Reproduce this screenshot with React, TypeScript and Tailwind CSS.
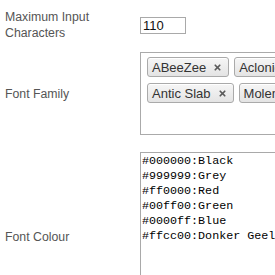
import { X } from "lucide-react";

const tags = [
  ["ABeeZee", "Aclonica"],
  ["Antic Slab", "Molengo"],
];

const colours = [
  "#000000:Black",
  "#999999:Grey",
  "#ff0000:Red",
  "#00ff00:Green",
  "#0000ff:Blue",
  "#ffcc00:Donker Geel",
];

function Tag({ name }: { name: string }) {
  return (
    <span className="flex h-[20px] shrink-0 items-center gap-[7px] rounded-[3px] border border-[#aaaaaa] bg-gradient-to-b from-[#f6f6f6] to-[#e4e4e4] pl-[4px] pr-[6px] text-[13px] leading-none text-[#333333] shadow-[inset_0_1px_0_#ffffff]">
      {name}
      <X className="h-[9px] w-[9px] text-[#5a5a5a]" strokeWidth={4.5} />
    </span>
  );
}

export default function App() {
  return (
    <div className="h-[275px] w-[275px] overflow-hidden bg-white pt-[9px] font-['Liberation_Sans',Arial,sans-serif]">
      {/* Max input */}
      <div className="flex items-center">
        <label className="w-[140px] shrink-0 pl-[5px] text-[12.3px] leading-[16px] text-[#555555]">
          Maximum Input
          <br />
          Characters
        </label>
        <input
          className="h-[17px] w-[46px] border border-[#a9a9a9] px-[2px] text-[13px] leading-none text-[#111111] outline-none"
          defaultValue="110"
          readOnly
        />
      </div>

      {/* Font family */}
      <div className="mt-[11px] flex items-center">
        <label className="w-[140px] shrink-0 pl-[5px] text-[12.3px] leading-[16px] text-[#555555]">
          Font Family
        </label>
        <div className="flex h-[83px] w-[300px] shrink-0 flex-col gap-[6px] border border-[#aaaaaa] pl-[6px] pt-[4px]">
          {tags.map((row, i) => (
            <div key={i} className="flex gap-[5px]">
              {row.map((t) => (
                <Tag key={t} name={t} />
              ))}
            </div>
          ))}
        </div>
      </div>

      {/* Font colour */}
      <div className="mt-[17px] flex items-center">
        <label className="w-[140px] shrink-0 pl-[5px] text-[12.3px] leading-[16px] text-[#555555]">
          Font Colour
        </label>
        <textarea
          className="h-[170px] w-[300px] shrink-0 resize-none overflow-hidden border border-[#a9a9a9] px-[1px] pt-[1px] font-['Liberation_Mono','Courier_New',monospace] text-[11.7px] leading-[15px] text-black outline-none"
          defaultValue={colours.join("\n")}
          readOnly
        />
      </div>
    </div>
  );
}
